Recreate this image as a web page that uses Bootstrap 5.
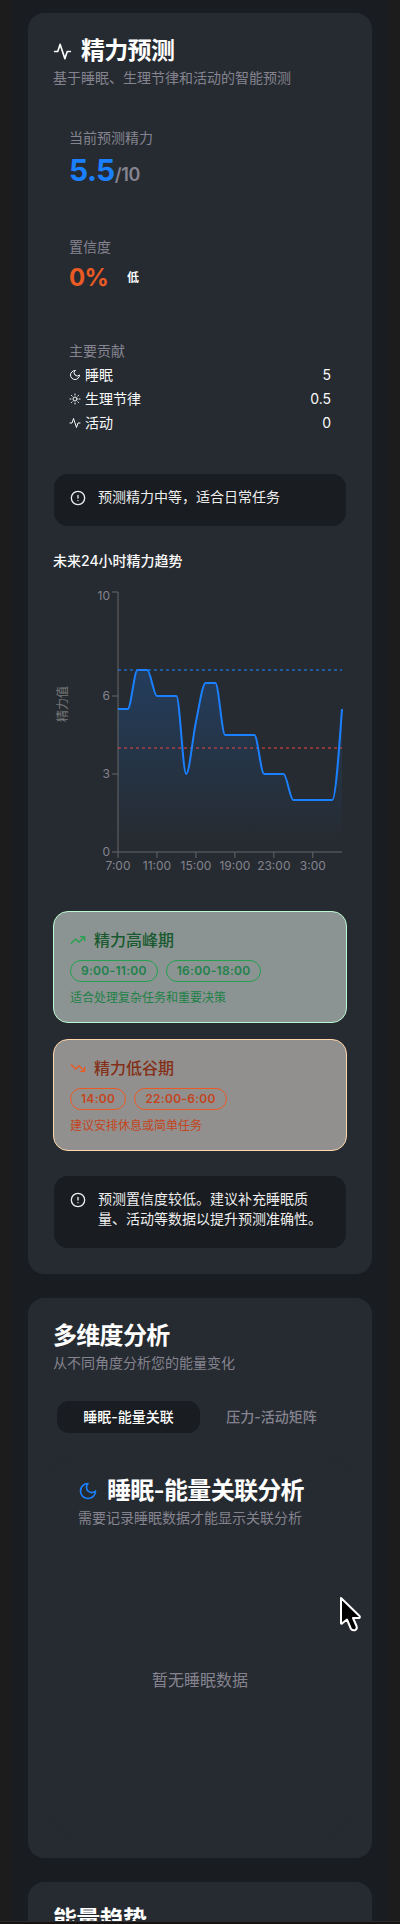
<!DOCTYPE html>
<html lang="zh-CN" data-bs-theme="dark">
<head>
<meta charset="utf-8">
<meta name="viewport" content="width=device-width, initial-scale=1">
<title>精力预测</title>
<link rel="stylesheet" href="https://cdn.jsdelivr.net/npm/bootstrap@5.3.0/dist/css/bootstrap.min.css">
<style>
html{overflow:hidden}
body{font-family:Inter,"Noto Sans CJK SC",sans-serif;font-size:14px;line-height:20px;color:#fafafa;background:#1c1c1c;height:1924px;overflow:hidden}
.page{margin:0 12px;padding:13px 16px 0;height:1921px;overflow:hidden;background:#191c20;gap:24px}
.edge{height:3px;background:#161212;border-top:1px solid #2b2b2b}
.panel{--bs-card-bg:#262b31;--bs-card-border-width:0;--bs-card-border-radius:16px;--bs-card-color:#fafafa;padding:25px;flex:none}
.panel>*{flex-shrink:0}
svg{flex:none;display:block}
.ico{fill:none;stroke:currentColor;stroke-width:2;stroke-linecap:round;stroke-linejoin:round}
.ttl{font-size:24px;line-height:24px;font-weight:600;letter-spacing:-.7px;margin:0;color:#fff;white-space:nowrap}
.dim{color:#85838f}
.head{padding-top:1px}
.head .dim{margin-top:5px}
.stat{padding-left:16px}
.big{font-size:30px;line-height:36px;height:36px;font-weight:700;letter-spacing:-.6px;color:#1a80ff}
.big span{font-size:18px;line-height:18px;font-weight:600;letter-spacing:-.3px}
.pct{font-size:24px;line-height:32px;font-weight:700;letter-spacing:-.8px;color:#ea5a24}
.lvl{font-size:12px;font-weight:600}
.notice{--bs-alert-bg:#191c20;--bs-alert-border-color:transparent;--bs-alert-padding-x:16px;--bs-alert-padding-y:16px;--bs-alert-margin-bottom:0;--bs-alert-border-radius:15px;--bs-alert-color:#eee;background-clip:padding-box;gap:12px}
.chart text{font-size:12px;fill:#85838f}
.slot{border:1px solid;border-radius:15px;padding:16px;height:112px}
.slot h3{font-size:16px;line-height:24px;font-weight:500;margin:0 0 8px}
.slot p{font-size:12px;line-height:16px;margin:8px 0 0}
.pill{--bs-badge-font-size:12px;--bs-badge-font-weight:600;--bs-badge-padding-x:10px;--bs-badge-padding-y:2px;border:1px solid;border-radius:11px;line-height:16px;letter-spacing:.3px}
.peak{background:#8b9492;border-color:#bbf7d0}
.peak h3{color:#19592f}.peak svg,.peak .pill{color:#24a150}.peak .pill{color:#20814a;border-color:#24a150}.peak p{color:#218048}
.low{background:#92908e;border-color:#fed7aa}
.low h3{color:#842f17}.low svg{color:#ea5a24}.low .pill{color:#c4441c;border-color:#ea5a24}.low p{color:#c4441c}
.tabs{--bs-nav-pills-border-radius:12px;--bs-nav-pills-link-active-bg:#191c20;--bs-nav-pills-link-active-color:#fff;--bs-nav-link-color:#85838f;padding:0 4px}
.tabs .nav-link{font-size:14px;line-height:20px;font-weight:500;padding:6px 0}
.inner{border:1px solid #252930;border-radius:16px;margin-top:24px;height:377px;padding:21px 24px 24px}
.pointer{position:absolute;left:339px;top:1596px}
</style>
</head>
<body>
<main class="page d-flex flex-column">
  <section class="card panel" style="height:1261px">
    <div class="head">
      <h1 class="ttl d-flex align-items-center" style="gap:9px"><svg class="ico" width="19" height="19" viewBox="0 0 24 24"><path d="M22 12h-4l-3 9L9 3l-3 9H2"/></svg>精力预测</h1>
      <div class="dim">基于睡眠、生理节律和活动的智能预测</div>
    </div>
    <div class="stat" style="margin-top:40px">
      <div class="dim">当前预测精力</div>
      <div class="big" style="margin-top:4px">5.5<span class="dim">/10</span></div>
    </div>
    <div class="stat" style="margin-top:49px">
      <div class="dim">置信度</div>
      <div class="d-flex align-items-center" style="gap:19px;height:32px;margin-top:5px"><span class="pct">0%</span><span class="lvl">低</span></div>
    </div>
    <div class="stat" style="margin-top:47px;padding-right:16px">
      <div class="dim" style="margin-bottom:4px">主要贡献</div>
      <div class="d-flex flex-column gap-1">
        <div class="d-flex justify-content-between"><span class="d-flex align-items-center gap-1"><svg class="ico" width="12" height="12" viewBox="0 0 24 24"><path d="M12 3a6 6 0 0 0 9 9 9 9 0 1 1-9-9Z"/></svg>睡眠</span><span>5</span></div>
        <div class="d-flex justify-content-between"><span class="d-flex align-items-center gap-1"><svg class="ico" width="12" height="12" viewBox="0 0 24 24"><circle cx="12" cy="12" r="4"/><path d="M12 2v2M12 20v2M4.93 4.93l1.41 1.41M17.66 17.66l1.41 1.41M2 12h2M20 12h2M6.34 17.66l-1.41 1.41M19.07 4.93l-1.41 1.41"/></svg>生理节律</span><span>0.5</span></div>
        <div class="d-flex justify-content-between"><span class="d-flex align-items-center gap-1"><svg class="ico" width="12" height="12" viewBox="0 0 24 24"><path d="M22 12h-4l-3 9L9 3l-3 9H2"/></svg>活动</span><span>0</span></div>
      </div>
    </div>
    <div class="alert notice d-flex" style="height:54px;margin-top:40px">
      <svg class="ico" width="16" height="16" viewBox="0 0 24 24"><circle cx="12" cy="12" r="10"/><path d="M12 8v4M12 16h.01"/></svg>
      <span style="margin-top:-3px">预测精力中等，适合日常任务</span>
    </div>
    <div class="fw-medium" style="margin-top:24px">未来24小时精力趋势</div>
    <svg class="chart" width="294" height="295" viewBox="-1 0 294 295" style="margin-top:14px">
      <defs><linearGradient id="fade" x1="0" y1="85" x2="0" y2="267" gradientUnits="userSpaceOnUse"><stop offset=".05" stop-color="#1a80ff" stop-opacity=".2"/><stop offset=".95" stop-color="#1a80ff" stop-opacity="0"/></linearGradient></defs>
      <path fill="url(#fade)" d="M64 124H73.74C76.98 124 80.23 85 83.48 85H93.22C96.46 85 99.71 111 102.96 111H122.43C125.68 111 128.93 189 132.17 189C135.42 189 138.67 152.2 141.91 137C145.16 121.8 148.4 98 151.65 98H161.39C164.64 98 167.88 150 171.13 150H200.35C203.6 150 206.84 189 210.09 189H229.57C232.81 189 236.06 215 239.3 215H278.26C281.51 215 284.75 169.5 288 124V267H64Z"/>
      <g stroke="#666" fill="none"><path d="M64 7V267M58 7h6M58 111h6M58 189h6M58 267H288M64 267v6M102.96 267v6M141.91 267v6M180.87 267v6M219.83 267v6M258.78 267v6"/></g>
      <path d="M64 85H288" stroke="#1a80ff" stroke-opacity=".55" stroke-width="2" stroke-dasharray="3 3"/>
      <path d="M64 163H288" stroke="#ef4444" stroke-opacity=".5" stroke-width="2" stroke-dasharray="3 3"/>
      <path fill="none" stroke="#1a80ff" stroke-width="2" d="M64 124H73.74C76.98 124 80.23 85 83.48 85H93.22C96.46 85 99.71 111 102.96 111H122.43C125.68 111 128.93 189 132.17 189C135.42 189 138.67 152.2 141.91 137C145.16 121.8 148.4 98 151.65 98H161.39C164.64 98 167.88 150 171.13 150H200.35C203.6 150 206.84 189 210.09 189H229.57C232.81 189 236.06 215 239.3 215H278.26C281.51 215 284.75 169.5 288 124"/>
      <g text-anchor="end"><text x="56" y="15">10</text><text x="56" y="115.3">6</text><text x="56" y="193.3">3</text><text x="56" y="271.3">0</text></g>
      <g text-anchor="middle"><text x="64" y="284.5">7:00</text><text x="103" y="284.5">11:00</text><text x="142" y="284.5">15:00</text><text x="180.9" y="284.5">19:00</text><text x="219.8" y="284.5">23:00</text><text x="258.8" y="284.5">3:00</text>
      <text transform="translate(13 119) rotate(-90)" style="fill:#777">精力值</text></g>
    </svg>
    <div class="slot peak" style="margin-top:31px">
      <h3 class="d-flex align-items-center gap-2"><svg class="ico" width="16" height="16" viewBox="0 0 24 24"><path d="M22 7l-8.5 8.5-5-5L2 17M16 7h6v6"/></svg>精力高峰期</h3>
      <div class="d-flex gap-2"><span class="badge pill">9:00-11:00</span><span class="badge pill">16:00-18:00</span></div>
      <p>适合处理复杂任务和重要决策</p>
    </div>
    <div class="slot low mt-3">
      <h3 class="d-flex align-items-center gap-2"><svg class="ico" width="16" height="16" viewBox="0 0 24 24"><path d="M22 17l-8.5-8.5-5 5L2 7M16 17h6v-6"/></svg>精力低谷期</h3>
      <div class="d-flex gap-2"><span class="badge pill">14:00</span><span class="badge pill">22:00-6:00</span></div>
      <p>建议安排休息或简单任务</p>
    </div>
    <div class="alert notice d-flex" style="height:74px;margin-top:24px">
      <svg class="ico" width="16" height="16" viewBox="0 0 24 24"><circle cx="12" cy="12" r="10"/><path d="M12 8v4M12 16h.01"/></svg>
      <span style="margin-top:-3px">预测置信度较低。建议补充睡眠质<br>量、活动等数据以提升预测准确性。</span>
    </div>
  </section>

  <section class="card panel" style="height:560px">
    <div class="head">
      <h2 class="ttl">多维度分析</h2>
      <div class="dim">从不同角度分析您的能量变化</div>
    </div>
    <nav class="nav nav-pills nav-justified tabs flex-nowrap" style="margin-top:28px">
      <a class="nav-link active" href="#">睡眠-能量关联</a>
      <a class="nav-link" href="#">压力-活动矩阵</a>
    </nav>
    <div class="inner d-flex flex-column">
      <div class="head pt-0">
        <h2 class="ttl d-flex align-items-center" style="gap:9px"><svg class="ico" width="20" height="20" viewBox="0 0 24 24" style="color:#1a80ff"><path d="M12 3a6 6 0 0 0 9 9 9 9 0 1 1-9-9Z"/></svg>睡眠-能量关联分析</h2>
        <div class="dim">需要记录睡眠数据才能显示关联分析</div>
      </div>
      <div class="dim flex-grow-1 d-flex align-items-center justify-content-center fs-6" style="padding-top:23px">暂无睡眠数据</div>
    </div>
  </section>

  <section class="card panel" style="height:300px">
    <div class="head"><h2 class="ttl">能量趋势</h2></div>
  </section>
</main>
<div class="edge"></div>
<svg class="pointer" width="25" height="40" viewBox="0 0 25 40"><path d="M2 2V27Q2 28 3 27.500L8 23.500L12 33Q14 35 16.500 34Q18.500 32.500 17.500 30L14 22H20Q21.500 21.500 20.500 20Z" fill="#000" stroke="#fff" stroke-width="2" stroke-linejoin="round"/></svg>
<script src="https://cdn.jsdelivr.net/npm/bootstrap@5.3.0/dist/js/bootstrap.bundle.min.js"></script>
</body>
</html>
